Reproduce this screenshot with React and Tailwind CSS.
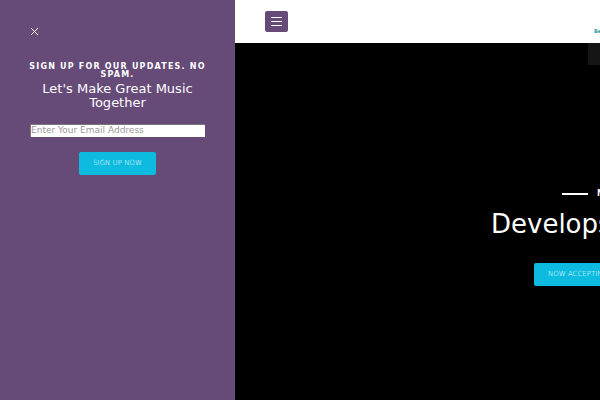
import React, { useState } from "react";

const SignUpPanel = ({ email, setEmail, onClose }) => {
  const handleSubmit = (e) => {
    e.preventDefault();
  };

  return (
    <aside className="w-[235px] shrink-0 bg-[#664a78] px-[30px] pt-[27px] text-center text-white">
      <button
        type="button"
        aria-label="Close"
        onClick={onClose}
        className="block h-[9px] w-[9px]"
      >
        <svg viewBox="0 0 9 9" className="h-[9px] w-[9px]" fill="none" stroke="#fff">
          <path d="M1 1 L8 8 M8 1 L1 8" />
        </svg>
      </button>
      <form onSubmit={handleSubmit} className="mt-[27px]">
        <h6 className="-mx-[4px] text-[8px] leading-[8px] font-bold tracking-[0.15em] uppercase">
          Sign up for our updates. No spam.
        </h6>
        <h3 className="mt-[3px] text-[13px] leading-[14px]">
          Let's Make Great Music Together
        </h3>
        <input
          type="email"
          aria-label="Email address"
          placeholder="Enter Your Email Address"
          value={email}
          onChange={(e) => setEmail(e.target.value)}
          className="mt-[14px] block h-[13px] w-full border-t border-l border-[#777] bg-white pb-[3px] text-[9px] leading-[9px] text-[#333] placeholder:text-[#999] placeholder:opacity-100"
        />
        <button
          type="submit"
          className="mt-[15px] h-[23px] rounded-[2px] bg-[#0cbbdf] px-[14px] text-[7px] font-extralight uppercase"
        >
          Sign up now
        </button>
      </form>
    </aside>
  );
};

const Header = ({ onToggle }) => (
  <header className="flex h-[43px] bg-white pl-[30px]">
    <button
      type="button"
      aria-label="Menu"
      onClick={onToggle}
      className="mt-[11px] flex h-[21px] w-[23px] shrink-0 items-center justify-center rounded-[2px] bg-[#664a78]"
    >
      <svg viewBox="0 0 11 9" className="h-[9px] w-[11px]" stroke="#fff">
        <path d="M0 0.5 H11 M0 4.5 H11 M0 8.5 H11" />
      </svg>
    </button>
    <a
      href="#home"
      className="mt-[28px] ml-[306px] text-[5px] leading-[6px] font-bold whitespace-nowrap text-[#2f9aa5]"
    >
      Be
    </a>
  </header>
);

const Hero = () => (
  <section className="flex flex-1 flex-col bg-black text-white">
    <div className="h-[22px] w-[12px] self-end bg-[#151515]"></div>
    <div className="mt-[124px] flex items-center gap-[9px] pl-[327px]">
      <span className="h-[2px] w-[26px] shrink-0 bg-white"></span>
      <span className="text-[8px] leading-[10px] font-bold">N</span>
    </div>
    <h1 className="mt-[10px] pl-[256px] text-[26px] leading-[30px]">Develops</h1>
    <a
      href="#apply"
      className="mt-[24px] ml-[299px] flex h-[23px] w-[120px] items-center rounded-[2px] bg-[#0cbbdf] pl-[14px] text-[7px] font-extralight whitespace-nowrap uppercase"
    >
      Now accepting
    </a>
  </section>
);

const App = () => {
  const [isOpen, setIsOpen] = useState(true);
  const [email, setEmail] = useState("");

  return (
    <div
      style={{ fontFamily: '"DejaVu Sans", sans-serif' }}
      className="flex min-h-screen overflow-hidden bg-black"
    >
      {isOpen && (
        <SignUpPanel
          email={email}
          setEmail={setEmail}
          onClose={() => setIsOpen(false)}
        />
      )}
      <main className="flex min-w-0 flex-1 flex-col overflow-hidden">
        <Header onToggle={() => setIsOpen(!isOpen)} />
        <Hero />
      </main>
    </div>
  );
};

export default App;
